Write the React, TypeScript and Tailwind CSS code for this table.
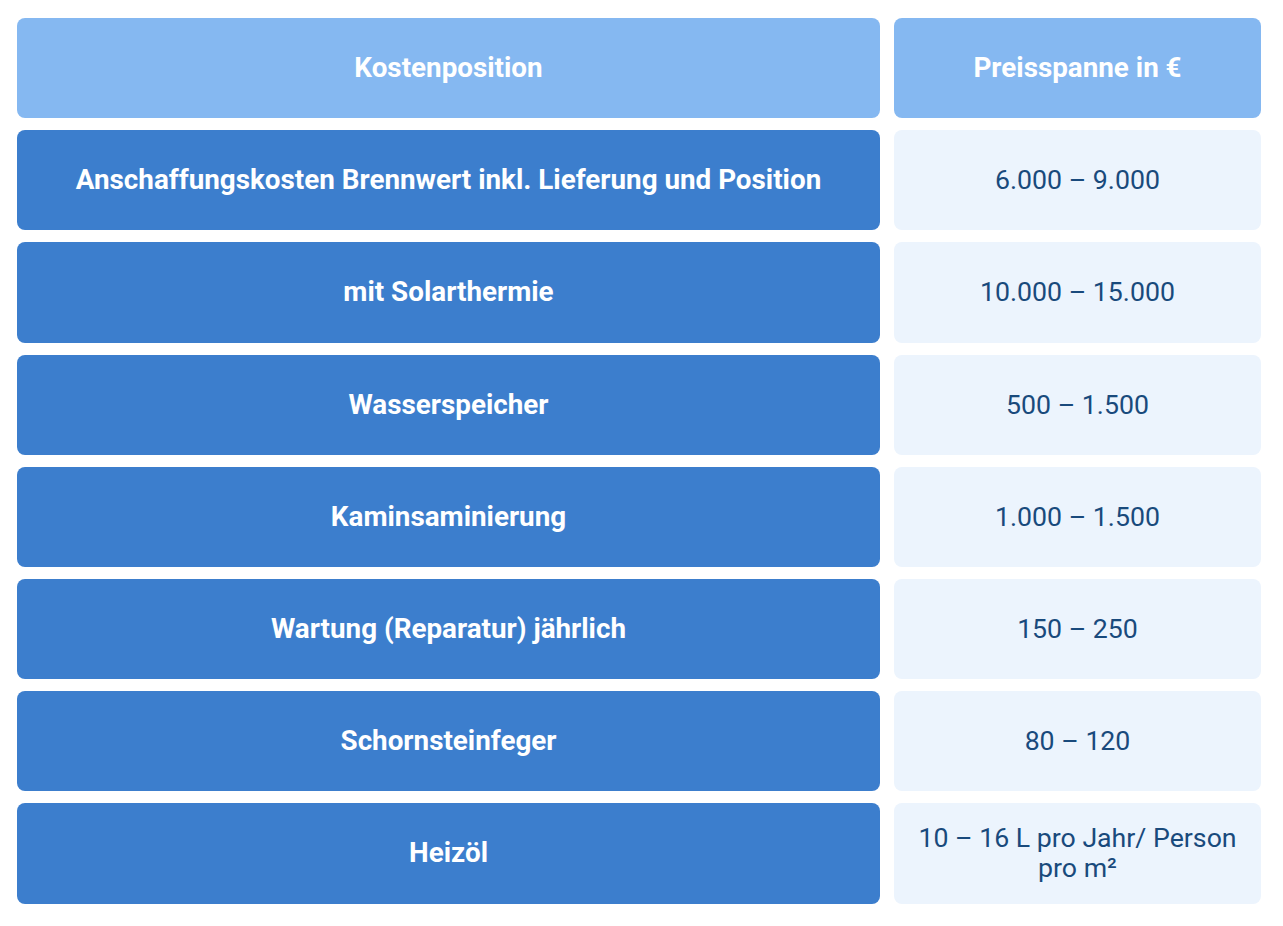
import React from 'react';

const rows: [string, string][] = [
  ['Anschaffungskosten Brennwert inkl. Lieferung und Position', '6.000 – 9.000'],
  ['mit Solarthermie', '10.000 – 15.000'],
  ['Wasserspeicher', '500 – 1.500'],
  ['Kaminsaminierung', '1.000 – 1.500'],
  ['Wartung (Reparatur) jährlich', '150 – 250'],
  ['Schornsteinfeger', '80 – 120'],
  ['Heizöl', '10 – 16 L pro Jahr/ Person pro m²'],
];

export default function App() {
  return (
    <div className="min-h-screen bg-white pl-[17px] pt-[18px]" style={{ fontFamily: 'Roboto, "Noto Sans", sans-serif' }}>
      <div className="grid w-[1244px] grid-cols-[863px_367px] gap-x-[14px] gap-y-[12px]">
        {/* Header */}
        <div className="flex h-[100.2px] items-center justify-center rounded-lg bg-[#85b8f1] text-[27.8px] font-bold text-white">
          Kostenposition
        </div>
        <div className="flex h-[100.2px] items-center justify-center rounded-lg bg-[#85b8f1] text-[27.8px] font-bold text-white">
          Preisspanne in €
        </div>

        {rows.map(([label, price]) => (
          <React.Fragment key={label}>
            <div className="flex h-[100.2px] items-center justify-center rounded-lg bg-[#3c7ecd] px-6 text-center text-[27.8px] font-bold leading-[30px] text-white">
              {label}
            </div>
            <div className="flex h-[100.2px] items-center justify-center rounded-lg bg-[#ecf4fd] px-5 text-center text-[26.7px] leading-[30px] text-[#194a7c]">
              {price}
            </div>
          </React.Fragment>
        ))}
      </div>
    </div>
  );
}
